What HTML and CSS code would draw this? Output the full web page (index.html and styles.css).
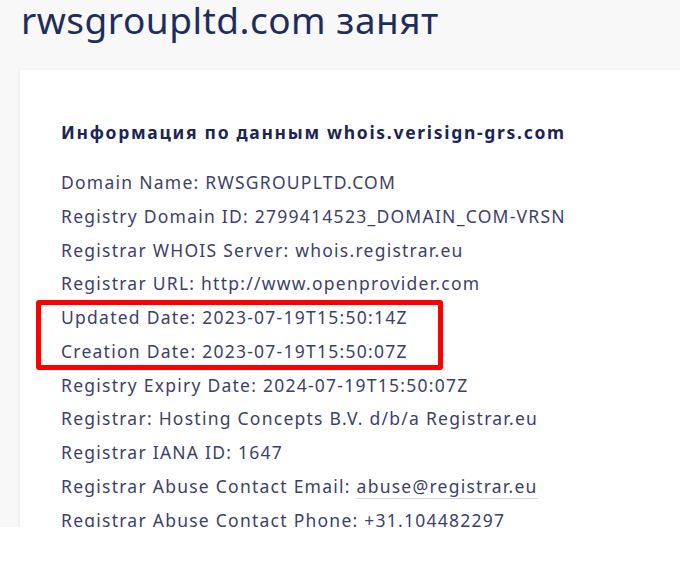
FILE: index.html
```html
<!DOCTYPE html>
<html lang="ru">
<head>
<meta charset="utf-8">
<title>rwsgroupltd.com занят</title>
<link rel="stylesheet" href="styles.css">
</head>
<body>
<div class="page">
  <h1 class="title">rwsgroupltd.com занят</h1>
  <div class="card">
    <h2 class="whois-title">Информация по данным whois.verisign-grs.com</h2>
    <div class="rows">
      <div class="row">Domain Name: RWSGROUPLTD.COM</div>
      <div class="row">Registry Domain ID: 2799414523_DOMAIN_COM-VRSN</div>
      <div class="row">Registrar WHOIS Server: whois.registrar.eu</div>
      <div class="row">Registrar URL: http://www.openprovider.com</div>
      <div class="marked">
        <div class="row">Updated Date: 2023-07-19T15:50:14Z</div>
        <div class="row">Creation Date: 2023-07-19T15:50:07Z</div>
      </div>
      <div class="row">Registry Expiry Date: 2024-07-19T15:50:07Z</div>
      <div class="row">Registrar: Hosting Concepts B.V. d/b/a Registrar.eu</div>
      <div class="row">Registrar IANA ID: 1647</div>
      <div class="row">Registrar Abuse Contact Email: <a class="mail" href="#">abuse@registrar.eu</a></div>
      <div class="row">Registrar Abuse Contact Phone: +31.104482297</div>
    </div>
  </div>
</div>
</body>
</html>
```

FILE: styles.css
```css
html, body {
  margin: 0;
  padding: 0;
  background: #ffffff;
}

.page {
  height: 527px;
  overflow: hidden;
  background: #f8f8f8;
  font-family: "Noto Sans", "Open Sans", sans-serif;
}

.title {
  margin: 0;
  padding: 2px 0 0 21px;
  height: 68px;
  font-size: 37px;
  font-weight: 400;
  line-height: 36px;
  color: #1f2d5c;
  letter-spacing: 0.5px;
}

.card {
  margin-left: 20px;
  background: #ffffff;
  box-shadow: -1px 0 3px rgba(0, 0, 0, 0.06);
  padding: 49px 0 0 41px;
  height: 600px;
}

.whois-title {
  margin: 0 0 21px 0;
  font-size: 17.5px;
  font-weight: 700;
  line-height: 26px;
  letter-spacing: 1.7px;
  color: #1c2456;
}

.rows {
  font-size: 17.5px;
  letter-spacing: 1.25px;
  color: #3d3f6b;
}

.row {
  line-height: 33.75px;
  white-space: nowrap;
}

.marked {
  position: relative;
}

.marked::after {
  content: "";
  position: absolute;
  left: -25px;
  top: -1px;
  width: 397px;
  height: 60px;
  border: 5px solid #ff0000;
  border-radius: 3px;
}

.mail {
  color: #3d3f6b;
  text-decoration: none;
  border-bottom: 1px solid #d6d8e0;
}
```
